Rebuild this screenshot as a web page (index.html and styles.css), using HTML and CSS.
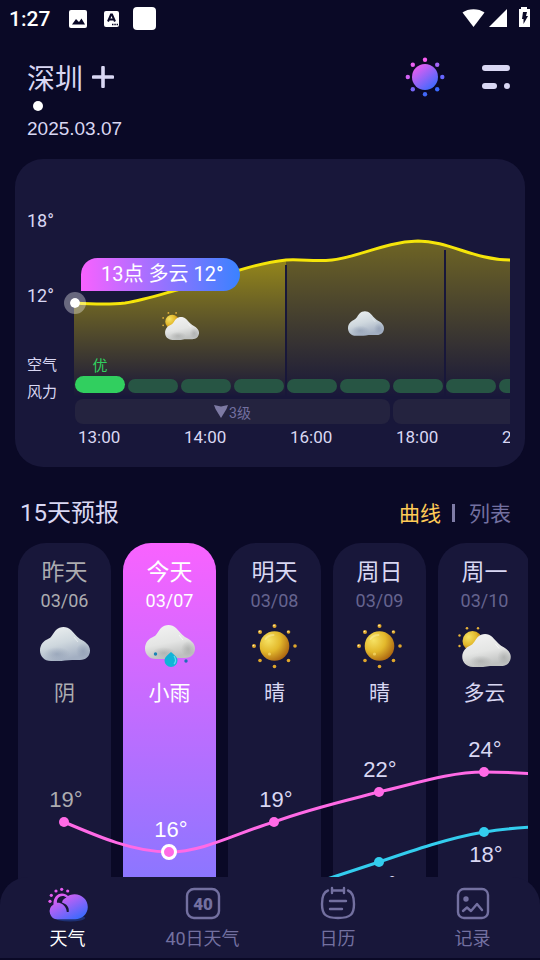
FILE: index.html
```
<!DOCTYPE html>
<html lang="zh-CN">
<head>
  <meta charset="UTF-8" />
  <meta name="viewport" content="width=device-width, initial-scale=1.0"/>
  <title>深圳天气</title>
  <link rel="stylesheet" href="styles.css">
</head>
<body>
  <!-- shared icons -->
  <svg class="sprite" aria-hidden="true">
    <defs>
      <radialGradient id="sunFill" cx="0.3" cy="0.3" r="0.8">
        <stop offset="0" stop-color="#f6e264"/>
        <stop offset="0.5" stop-color="#e3b92c"/>
        <stop offset="1" stop-color="#a8600f"/>
      </radialGradient>
      <linearGradient id="cloudWhite" x1="0" y1="0" x2="0.3" y2="1">
        <stop offset="0" stop-color="#f4f4f4"/>
        <stop offset="0.6" stop-color="#e4e5e4"/>
        <stop offset="1" stop-color="#bfc1c0"/>
      </linearGradient>
      <linearGradient id="cloudGrey" x1="0" y1="0" x2="0.4" y2="1">
        <stop offset="0" stop-color="#f0f3f3"/>
        <stop offset="0.55" stop-color="#cfd8de"/>
        <stop offset="1" stop-color="#a3afc2"/>
      </linearGradient>
      <radialGradient id="cloudShade">
        <stop offset="0" stop-color="#8795ad" stop-opacity="0.55"/>
        <stop offset="1" stop-color="#8795ad" stop-opacity="0"/>
      </radialGradient>
      <radialGradient id="cloudSoft">
        <stop offset="0" stop-color="#9a9c9b" stop-opacity="0.5"/>
        <stop offset="1" stop-color="#9a9c9b" stop-opacity="0"/>
      </radialGradient>
      <linearGradient id="brand" x1="0.1" y1="0" x2="0.9" y2="1">
        <stop offset="0" stop-color="#f95cf0"/>
        <stop offset="1" stop-color="#2b6bff"/>
      </linearGradient>
    </defs>
    <symbol id="cloudy" viewBox="0 0 50 34">
      <path fill="url(#cloudGrey)" d="M11 34C4 34 0 29 0 23.500C0 17.500 4 13.500 8 12C12 10.500 13 6 16 3C20 -1 27 -1 31 3C34 6 36 9 40 12C45 14.500 50 18 50 23.500C50 29 46 33 40 33C34 33 30 32.500 25 33.500C20 34.500 16 34 11 34Z"/>
      <ellipse cx="17" cy="27" rx="13" ry="7" fill="url(#cloudShade)"/>
      <ellipse cx="43" cy="24" rx="7" ry="8" fill="url(#cloudShade)"/>
      <path d="M34 10L38 15" stroke="#fff" stroke-width="1" opacity="0.5"/>
    </symbol>
    <symbol id="white-cloud" viewBox="0 0 50 34">
      <path fill="url(#cloudWhite)" d="M11 34C4 34 0 29 0 23.500C0 17.500 4 13.500 8 12C12 10.500 13 6 16 3C20 -1 27 -1 31 3C34 6 36 9 40 12C45 14.500 50 18 50 23.500C50 29 46 33 40 33C34 33 30 32.500 25 33.500C20 34.500 16 34 11 34Z"/>
      <ellipse cx="19" cy="28" rx="12" ry="6" fill="url(#cloudSoft)"/>
      <ellipse cx="43" cy="24" rx="7" ry="8" fill="url(#cloudSoft)"/>
      <path d="M34 10L38 15" stroke="#fff" stroke-width="1" opacity="0.7"/>
    </symbol>
    <symbol id="sunny" viewBox="0 0 54 54">
      <circle cx="26.500" cy="27" r="14.800" fill="url(#sunFill)"/>
      <g fill="#e0a72c">
        <circle cx="26.500" cy="7" r="2"/><circle cx="40.500" cy="13" r="1.800"/>
        <circle cx="47" cy="27" r="1.800"/><circle cx="40.500" cy="41.500" r="1.800"/>
        <circle cx="26.500" cy="47.500" r="1.800"/><circle cx="12" cy="41.500" r="1.800"/>
        <circle cx="6" cy="27" r="2"/><circle cx="12" cy="13" r="2"/>
      </g>
      <g fill="#fff3b0">
        <circle cx="26" cy="6.500" r="0.800"/><circle cx="11.500" cy="12.500" r="0.800"/>
        <circle cx="5.500" cy="26.500" r="0.800"/><circle cx="40" cy="12.500" r="0.700"/>
      </g>
      <circle cx="21.500" cy="35" r="1.600" fill="#fbe57a" opacity="0.6"/>
      <path d="M17.500 20C19.500 17 22.500 16 25.500 16" fill="none" stroke="#fff8c0" stroke-width="2" stroke-linecap="round" opacity="0.4"/>
    </symbol>
    <symbol id="partly" viewBox="0 0 54 40">
      <circle cx="14.500" cy="14" r="10" fill="url(#sunFill)"/>
      <g fill="#e5b23a">
        <circle cx="9" cy="1.300" r="1.300"/><circle cx="20" cy="1.300" r="1.200"/>
        <circle cx="1.500" cy="8.500" r="1.200"/><circle cx="1.500" cy="19" r="1.200"/>
      </g>
      <use href="#white-cloud" x="4" y="7" width="49" height="33"/>
    </symbol>
    <symbol id="rain" viewBox="0 0 50 44">
      <use href="#white-cloud" x="0" y="0" width="50" height="34"/>
      <path d="M26 27C29 30 32.500 32 32.500 35.500A6.500 6.500 0 0 1 19.500 35.500C19.500 32 23 30 26 27Z" fill="#11b4d8"/>
      <path d="M29 31C31 34 31 37 29 39" fill="none" stroke="#5fdcf0" stroke-width="1.200"/>
      <circle cx="10.500" cy="29" r="1.700" fill="#1b83b4"/>
      <circle cx="41" cy="36" r="1.700" fill="#1b6fb8"/>
    </symbol>
  </svg>

  <div class="app">
    <main class="page">
      <div class="status-bar">
        <span class="clock">1:27</span>
        <svg class="status-left" width="88" height="24" viewBox="0 0 88 24" aria-hidden="true">
          <rect x="0" y="3" width="18" height="18" rx="2" fill="#fff"/>
          <path d="M3 17.500L7 12L10 15L12.500 11.500L16 17.500Z" fill="#0a0927"/>
          <rect x="35" y="4" width="15" height="16" rx="2" fill="#fff"/>
          <path d="M39 14.500L42 7.500H43L46 14.500M40 12.500H45" fill="none" stroke="#0a0927" stroke-width="2"/>
          <path d="M43 17.500H49" stroke="#0a0927" stroke-width="1.500" stroke-dasharray="1.500 0.800"/>
          <rect x="64" y="0" width="23" height="23" rx="4" fill="#fff"/>
        </svg>
        <svg class="status-right" width="68" height="21" viewBox="0 0 68 21" aria-hidden="true">
          <path d="M0.500 4.500C6 0 17 0 22.500 4.500L11.500 19Z" fill="#fff"/>
          <path d="M45 1V19H27Z" fill="#fff"/>
          <path d="M59 1V-1H65V1H68V19H57V1Z" fill="#fff"/>
          <path d="M61 4H65L64 8H66L61.500 16V11H60Z" fill="#0a0927"/>
        </svg>
      </div>

      <header class="header">
        <div class="place">
          <div class="city-row">
            <h1 class="city">深圳</h1>
            <button class="icon-btn" aria-label="添加城市">
              <svg width="22" height="22" viewBox="0 0 22 22"><path d="M11 1.500V20.500M1.500 11H20.500" stroke="#d9d7f3" stroke-width="3.600" stroke-linecap="round"/></svg>
            </button>
          </div>
          <span class="page-dot"></span>
          <time class="date">2025.03.07</time>
        </div>
        <div class="actions">
          <button class="icon-btn" aria-label="主题">
            <svg width="40" height="40" viewBox="0 0 40 40">
              <circle cx="20" cy="20" r="13" fill="url(#brand)"/>
              <circle cx="20" cy="2.800" r="2.200" fill="#f95cf0"/><circle cx="32.200" cy="7.800" r="2.200" fill="#a465fa"/>
              <circle cx="37.300" cy="20" r="2.200" fill="#6766ff"/><circle cx="32.200" cy="32.200" r="2.200" fill="#3a69ff"/>
              <circle cx="20" cy="37.300" r="2.200" fill="#4268f8"/><circle cx="7.800" cy="32.200" r="2.200" fill="#7867f8"/>
              <circle cx="2.800" cy="20" r="2.200" fill="#d262f4"/><circle cx="7.800" cy="7.800" r="2.200" fill="#e860f0"/>
            </svg>
          </button>
          <button class="icon-btn" aria-label="菜单">
            <svg width="30" height="26" viewBox="0 0 30 26" fill="#d9d7f3">
              <rect x="1" y="1" width="28" height="6" rx="3"/>
              <rect x="1" y="19" width="15" height="6" rx="3"/>
              <circle cx="26" cy="22" r="3"/>
            </svg>
          </button>
        </div>
      </header>

      <section class="hourly">
        <div class="axis">
          <span class="axis-temp">18°</span>
          <span class="axis-temp">12°</span>
          <span class="axis-name">空气</span>
          <span class="axis-name">风力</span>
        </div>
        <div class="chart">
          <div class="strip">
            <svg class="plot" width="436" height="188" viewBox="0 0 436 188" aria-hidden="true">
              <defs>
                <linearGradient id="areaNow" gradientUnits="userSpaceOnUse" x1="0" y1="35" x2="0" y2="188">
                  <stop offset="0" stop-color="#ffe600" stop-opacity="0.600"/>
                  <stop offset="1" stop-color="#ffe600" stop-opacity="0"/>
                </linearGradient>
                <linearGradient id="areaNext" gradientUnits="userSpaceOnUse" x1="0" y1="30" x2="0" y2="188">
                  <stop offset="0" stop-color="#ffe600" stop-opacity="0.380"/>
                  <stop offset="1" stop-color="#ffe600" stop-opacity="0"/>
                </linearGradient>
              </defs>
              <path fill="url(#areaNow)" d="M0 94C15 95 35 96 51 94C70 91 88 85 106 80C135 72 175 55 212 51V188H0Z"/>
              <path fill="url(#areaNext)" d="M212 51C230 50 240 53 258 51C285 48 310 33 344 32C375 32 400 51 436 51V188H212Z"/>
              <path d="M212 56V188M371 41V188" stroke="#18173a" stroke-width="2"/>
              <path fill="none" stroke="#f5e50a" stroke-width="3" d="M0 94C15 95 35 96 51 94C70 91 88 85 106 80C135 72 175 55 212 51C230 50 240 53 258 51C285 48 310 33 344 32C375 32 400 51 436 51"/>
              <use href="#partly" x="88" y="103" width="38" height="28"/>
              <use href="#cloudy" x="274" y="102" width="36" height="25"/>
            </svg>
            <div class="air">
              <div class="air-cell now"><span>优</span><i></i></div>
              <div class="air-cell"><i></i></div>
              <div class="air-cell"><i></i></div>
              <div class="air-cell"><i></i></div>
              <div class="air-cell"><i></i></div>
              <div class="air-cell"><i></i></div>
              <div class="air-cell"><i></i></div>
              <div class="air-cell"><i></i></div>
              <div class="air-cell"><i></i></div>
            </div>
            <div class="wind">
              <div class="wind-level">
                <svg width="14" height="13" viewBox="0 0 14 13"><path d="M0 0L7 1.500L14 0L12.500 4L7 13L1.500 4Z" fill="#7d7aa4"/></svg>3级
              </div>
              <div class="wind-level"></div>
            </div>
            <div class="hours">
              <span>13:00</span>
              <span>14:00</span>
              <span>16:00</span>
              <span>18:00</span>
              <span>20:00</span>
            </div>
          </div>
          <div class="tip">13点 多云 12°</div>
          <span class="handle"></span>
        </div>
      </section>

      <section class="forecast">
        <div class="forecast-head">
          <h2>15天预报</h2>
          <div class="tabs">
            <button class="tab active">曲线</button>
            <span class="tab-line"></span>
            <button class="tab">列表</button>
          </div>
        </div>
        <div class="scroller">
          <div class="days">
            <article class="day past">
              <h3>昨天</h3>
              <time>03/06</time>
              <svg class="day-icon" viewBox="0 0 54 54"><use href="#cloudy" x="2" y="8" width="50" height="34"/></svg>
              <p>阴</p>
            </article>
            <article class="day today">
              <h3>今天</h3>
              <time>03/07</time>
              <svg class="day-icon" viewBox="0 0 54 54"><use href="#rain" x="2" y="6" width="50" height="44"/></svg>
              <p>小雨</p>
            </article>
            <article class="day">
              <h3>明天</h3>
              <time>03/08</time>
              <svg class="day-icon" viewBox="0 0 54 54"><use href="#sunny" width="54" height="54"/></svg>
              <p>晴</p>
            </article>
            <article class="day">
              <h3>周日</h3>
              <time>03/09</time>
              <svg class="day-icon" viewBox="0 0 54 54"><use href="#sunny" width="54" height="54"/></svg>
              <p>晴</p>
            </article>
            <article class="day">
              <h3>周一</h3>
              <time>03/10</time>
              <svg class="day-icon" viewBox="0 0 54 54"><use href="#partly" x="0" y="8" width="54" height="40"/></svg>
              <p>多云</p>
            </article>
          </div>
          <svg class="trend" width="571" height="400" viewBox="0 0 571 400">
            <g fill="none" stroke-width="3">
              <path stroke="#ff6ae6" d="M46 279C81 294 116 309 151 309C186 309 221 289 256 279C291 266 326 258 361 249C396 241 431 229 466 229C501 229 536 232 571 238"/>
              <path stroke="#33cdee" d="M256 352C291 342 326 331 361 319C396 307 431 295 466 289C501 283 536 283 571 281"/>
            </g>
            <g fill="#ff6ae6">
              <circle cx="46" cy="279" r="5"/>
              <circle cx="151" cy="309" r="6.500" stroke="#fff" stroke-width="3"/>
              <circle cx="256" cy="279" r="5"/>
              <circle cx="361" cy="249" r="5"/>
              <circle cx="466" cy="229" r="5"/>
            </g>
            <g fill="#33cdee">
              <circle cx="361" cy="319" r="5"/>
              <circle cx="466" cy="289" r="5"/>
            </g>
            <g class="temps">
              <text class="dim" x="48" y="264">19°</text>
              <text class="bright" x="153" y="294">16°</text>
              <text x="258" y="264">19°</text>
              <text x="362" y="234">22°</text>
              <text x="467" y="214">24°</text>
              <text x="362" y="349">15°</text>
              <text x="468" y="319">18°</text>
            </g>
          </svg>
        </div>
      </section>
    </main>

    <nav class="tabbar">
      <a class="active" href="#weather">
        <svg width="44" height="38" viewBox="0 0 44 38">
          <ellipse cx="24" cy="34" rx="15" ry="3.500" fill="#2b6bff" opacity="0.300"/>
          <g fill="#e65cf0">
            <circle cx="4" cy="17.300" r="1.600"/><circle cx="5.300" cy="11.300" r="1.600"/><circle cx="10" cy="7" r="1.600"/>
            <circle cx="15.700" cy="5.300" r="1.600"/><circle cx="21.700" cy="7" r="1.600"/>
          </g>
          <path d="M12 35.300A8 8 0 0 1 7.500 20.500C7 14 11 9.500 16 9.500C18.500 9.500 20.500 10.500 22 12C24 11 26 10.300 28.500 10.300C36 10.300 41.800 16 41.800 23C41.800 30 36 35.300 29 35.300Z" fill="url(#brand)"/>
          <path d="M11 18.800C10.500 15 13 12 16.500 12C18 12 19.500 12.700 20.500 13.500C18.500 14.500 16.500 15.500 16 18.500C20.500 20 23.500 23 22.700 28H20.800C20.500 24 18 20.500 14.500 19.300C13 18.700 12 18.700 11 18.800Z" fill="#18173a"/>
        </svg>
        天气
      </a>
      <a href="#days40">
        <svg width="44" height="38" viewBox="0 0 44 38">
          <rect x="6" y="5" width="32" height="29" rx="7" fill="none" stroke="#7370a0" stroke-width="2.400"/>
          <text class="badge-40" x="22" y="26">40</text>
        </svg>
        40日天气
      </a>
      <a href="#calendar">
        <svg width="44" height="38" viewBox="0 0 44 38" fill="none" stroke="#7370a0" stroke-width="2.400" stroke-linecap="round">
          <path d="M12 6.500C7.500 8 6 12 6 20C6 30 9 34 22 34S38 30 38 20C38 12 36.500 8 32 6.500"/>
          <path d="M16 4V9M28 4V9M17 6.500H27M14 17H30M14 25H26"/>
        </svg>
        日历
      </a>
      <a href="#records">
        <svg width="44" height="38" viewBox="0 0 44 38" fill="none" stroke="#7370a0" stroke-width="2.400" stroke-linecap="round" stroke-linejoin="round">
          <rect x="7" y="5" width="30" height="29" rx="6"/>
          <circle cx="15" cy="15" r="1.500" fill="#7370a0"/>
          <path d="M12 27L16 23.500L20 27L26 20L31 26"/>
        </svg>
        记录
      </a>
    </nav>
  </div>
</body>
</html>
```
FILE: styles.css
```
* { box-sizing: border-box; }

body {
  margin: 0;
  font-family: Roboto, "Noto Sans CJK SC", sans-serif;
  background: #0a0926;
  color: #d9d7f3;
}

h1, h2, h3, p {
  margin: 0;
  font-weight: 400;
}

button {
  font: inherit;
  color: inherit;
  background: none;
  border: none;
  padding: 0;
  cursor: pointer;
}

svg { display: block; flex: none; }

.sprite {
  position: absolute;
  width: 0;
  height: 0;
}

.app {
  height: 100vh;
  display: flex;
  flex-direction: column;
  padding-bottom: 2px;
}

.page {
  flex: 1;
  min-height: 0;
  overflow-y: auto;
  scrollbar-width: none;
}

/* status bar */
.status-bar {
  display: flex;
  align-items: center;
  height: 37px;
  padding: 0 10px 0 9px;
  color: #ffffff;
}

.clock {
  width: 60px;
  font-size: 21px;
  font-weight: 500;
}

.status-right {
  margin-left: auto;
  overflow: visible;
}

/* header */
.header {
  display: flex;
  justify-content: space-between;
  align-items: flex-start;
  padding: 20px 29px 0 27px;
}

.place {
  display: flex;
  flex-direction: column;
}

.city-row {
  display: flex;
  align-items: center;
  gap: 9px;
  height: 40px;
}

.city {
  padding-top: 6px;
  font-size: 28px;
  line-height: 40px;
}

.page-dot {
  width: 10px;
  height: 10px;
  margin: 4px 0 4px 6px;
  border-radius: 50%;
  background: #ffffff;
}

.date {
  font-family: "Liberation Sans", sans-serif;
  font-size: 19px;
  line-height: 28px;
  height: 26px;
}

.actions {
  display: flex;
  align-items: center;
  gap: 36px;
  height: 40px;
}

/* hourly card */
.hourly {
  display: flex;
  margin: 18px 15px 0;
  padding: 50px 15px 17px 12px;
  border-radius: 28px;
  background: #18173a;
}

.axis {
  display: flex;
  flex-direction: column;
  width: 47px;
  line-height: 24px;
}

.axis-temp {
  font-size: 18px;
  margin-bottom: 51px;
}

.axis-temp + .axis-temp { margin-bottom: 45px; }

.axis-name {
  font-size: 15px;
  margin-bottom: 3px;
}

.chart {
  position: relative;
  flex: 1;
  min-width: 0;
}

.strip {
  display: grid;
  grid-template-rows: 146px 42px auto auto;
  grid-template-columns: 100%;
  overflow: hidden;
}

.plot {
  grid-area: 1 / 1 / 3 / 2;
}

.air {
  grid-area: 2 / 1;
  display: flex;
  gap: 3px;
  padding: 0 0 4px 1px;
}

.air-cell {
  flex: none;
  width: 50px;
  display: flex;
  flex-direction: column;
  justify-content: flex-end;
  font-size: 15px;
  line-height: 20px;
  text-align: center;
  color: #31cf5f;
}

.air-cell i {
  height: 14px;
  border-radius: 7px;
  background: #275544;
}

.air-cell.now i {
  height: 17px;
  border-radius: 9px;
  background: #31cf5f;
}

.wind {
  display: flex;
  gap: 3px;
  padding: 2px 0 0 1px;
}

.wind-level {
  flex: none;
  display: flex;
  align-items: center;
  justify-content: center;
  width: 315px;
  height: 25px;
  border-radius: 8px;
  background: #24233f;
  font-size: 14px;
  color: #7370a0;
}

.wind-level svg { margin-right: 1px; }

.hours {
  display: flex;
  font-size: 17px;
  line-height: 26px;
}

.hours span {
  flex: none;
  width: 106px;
  padding-left: 4px;
}

.tip {
  position: absolute;
  left: 7px;
  top: 49px;
  padding: 0 17px 0 20px;
  border-radius: 17px 17px 17px 0;
  background: linear-gradient(to right, #f862ff, #3a82ff);
  font-size: 20px;
  line-height: 33px;
  color: #ffffff;
  white-space: nowrap;
}

.handle {
  position: absolute;
  left: -10px;
  top: 83px;
  width: 22px;
  height: 22px;
  border: 6px solid rgba(255, 255, 255, 0.35);
  border-radius: 50%;
  background: #ffffff;
  background-clip: padding-box;
}

/* forecast */
.forecast {
  padding: 26px 12px 0 18px;
}

.forecast-head {
  display: flex;
  justify-content: space-between;
  align-items: center;
  height: 40px;
  margin-bottom: 10px;
  padding: 0 17px 0 2px;
}

.forecast-head h2 {
  font-size: 24px;
  line-height: 38px;
}

.tabs {
  display: flex;
  align-items: center;
}

.tab {
  padding-bottom: 2px;
  font-size: 21px;
  color: #7370a0;
}

.tab.active { color: #ffcb57; }

.tab-line {
  width: 3px;
  height: 18px;
  margin: 0 14px 0 11px;
  background: #7f7ca6;
}

/* the curves share one cell with the day columns */
.scroller {
  display: grid;
  grid-template-columns: 100%;
  overflow: hidden;
}

.days, .trend { grid-area: 1 / 1; }

.days {
  display: flex;
  gap: 12px;
}

.day {
  flex: none;
  width: 93px;
  display: flex;
  flex-direction: column;
  align-items: center;
  padding-top: 12px;
  border-radius: 28px 28px 0 0;
  background: #18173a;
}

.day h3 {
  height: 34px;
  font-size: 23px;
  line-height: 36px;
}

.day time {
  font-size: 18px;
  line-height: 24px;
  color: #66648f;
}

.day p {
  font-size: 21px;
  line-height: 28px;
}

.day-icon {
  width: 54px;
  height: 54px;
  margin: 6px 0;
}

.day.past, .day.past time { color: #acacb0; }

.day.today {
  background: linear-gradient(to bottom, #f962ff, #8c76ff 334px);
}

.day.today, .day.today time { color: #ffffff; }

.temps {
  font-family: "Liberation Sans", sans-serif;
  font-size: 22px;
  text-anchor: middle;
  fill: #d9d7f3;
}

.temps .dim { fill: #acacb0; }
.temps .bright { fill: #ffffff; }

/* bottom navigation, its round corners lie over the page */
.tabbar {
  position: relative;
  display: flex;
  height: 81px;
  margin-top: -28px;
  padding-top: 7px;
  flex: none;
  border-radius: 28px 28px 0 0;
  background: #18173a;
}

.tabbar a {
  flex: 1;
  display: flex;
  flex-direction: column;
  align-items: center;
  font-size: 18px;
  line-height: 34px;
  color: #7370a0;
  text-decoration: none;
}

.tabbar a.active { color: #ffffff; }

.badge-40 {
  font-size: 17px;
  font-weight: 900;
  text-anchor: middle;
  fill: #7370a0;
}
```
